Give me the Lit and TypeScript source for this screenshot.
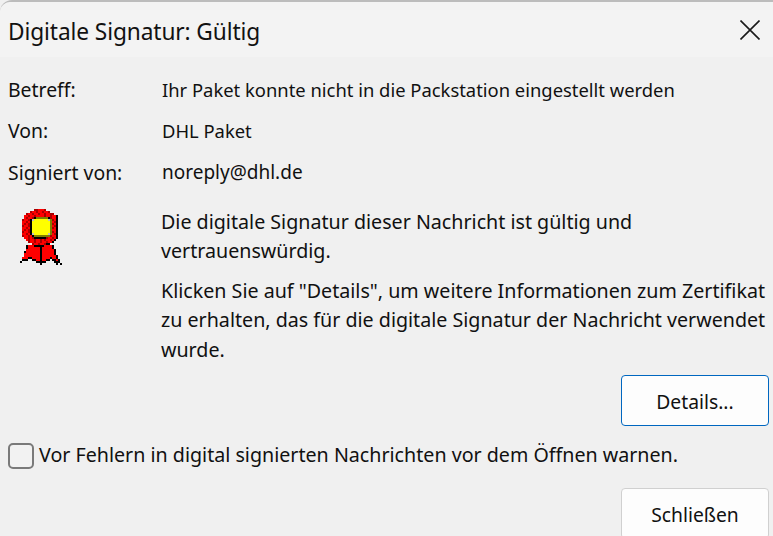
import { LitElement, html, css, svg } from "lit";
import { customElement } from "lit/decorators.js";

const RIBBON = [
  ".......DDRRRD........",
  ".....DRRDRRDRRD......",
  "...DRRDRRDRRDRRDD....",
  "..RRDRRDRRRRDRRDRRK..",
  "..RDRRDKOOOOOOKDRRK..",
  ".DRRDKGYYYYYYYGODRK..",
  ".RRDRKYYYYYYYYYORDK..",
  ".RDRDKYYYYYYYYYODRK..",
  ".DRRDKYYYYYYYYYORDK..",
  ".RRDRKYYYYYYYYYODRK..",
  ".RDRDKYYYYYYYYYORRK..",
  ".DRRDKYYYYYYYYYODRK..",
  ".RRDRKGYYYYYYYGORDK..",
  ".DRRDRKOOOOOOOODRRK..",
  "..RRDRDKKKKKKDRRDRK..",
  "...RDRRDRRDRDRRDRK...",
  "....DRRDRRDRRDRRK....",
  "......DRRDRRDKK......",
  "...KRRRKKKKKRRRRK....",
  "...KRRRRRRKRRRRRK....",
  "...RRRRRRRKRRRRRRK...",
  "..KRRRRRRRKRRRRRRK...",
  "..RRRRRRRRKRRRRRRK...",
  "..RRRRRRRRKRRRRRRRK..",
  ".RRRKKRRRRKRRRRKRRK..",
  ".KKK..KKRRKRRKK.KKRK.",
  "K.......KKKKK....KKK.",
  "..........K.......K.K",
];
const COLORS: Record<string, string> = {
  R: "#fe0000",
  D: "#a80000",
  K: "#000000",
  Y: "#ffff00",
  O: "#808000",
  G: "#c0c0c0",
};

@customElement("app-root")
export class AppRoot extends LitElement {
  static styles = css`
    :host {
      display: block;
      width: 773px;
      height: 536px;
      overflow: hidden;
      background: #f0f0f0;
      font-family: "Noto Sans", sans-serif;
      color: #111;
      font-size: 19.66px;
    }
    .window {
      height: 536px;
      display: flex;
      flex-direction: column;
      border-top: 2px solid #bcbcbc;
      border-top-left-radius: 12px;
      box-sizing: border-box;
    }
    .titlebar {
      height: 55px;
      flex: none;
      display: flex;
      align-items: center;
      justify-content: space-between;
      background: #f3f3f3;
      padding: 0 13px 0 8px;
      border-top-left-radius: 10px;
    }
    .title {
      font-size: 22.7px;
      letter-spacing: -0.1px;
      padding-top: 4px;
    }
    .close {
      display: block;
      width: 20px;
      height: 20px;
    }
    .body {
      flex: 1;
      display: flex;
      flex-direction: column;
      padding: 0 4px 0 8px;
    }
    .fields {
      display: grid;
      grid-template-columns: 154px 1fr;
      grid-auto-rows: 41.3px;
      align-items: center;
      padding-top: 12px;
      font-size: 18.4px;
    }
    .label {
      font-size: 19.4px;
    }
    .mail {
      font-size: 19px;
    }
    .message {
      display: grid;
      grid-template-columns: 153px 1fr;
      margin-top: 14px;
    }
    .seal {
      display: block;
      margin: 2px 0 0 12px;
    }
    .message p {
      margin: 0 0 10px;
      line-height: 29.4px;
    }
    .actions {
      display: flex;
      justify-content: flex-end;
    }
    button {
      width: 148px;
      height: 51px;
      box-sizing: border-box;
      background: #fdfdfd;
      border: 1px solid #d0d0d0;
      border-radius: 4px;
      font: inherit;
      font-size: 19.3px;
      color: inherit;
      padding: 2px 0 0;
      flex: none;
    }
    button.primary {
      border: 1.5px solid #0067c0;
    }
    .details-row {
      margin-top: 0.6px;
    }
    .check {
      display: flex;
      align-items: center;
      gap: 5px;
      margin-top: 17px;
      height: 26px;
    }
    .check-text {
      margin-top: -2px;
    }
    .box {
      width: 26px;
      height: 26px;
      box-sizing: border-box;
      border: 2px solid #7a7a7a;
      border-radius: 5px;
      background: #f2f2f2;
      flex: none;
    }
    .close-row {
      margin-top: 19px;
    }
  `;

  private seal() {
    return html`<svg class="seal" width="42" height="56" viewBox="0 0 21 28" shape-rendering="crispEdges">
      ${RIBBON.flatMap((row, y) =>
        [...row].map((c, x) =>
          c === "." ? null : svg`<rect x=${x} y=${y} width="1" height="1" fill=${COLORS[c]}></rect>`
        )
      )}
    </svg>`;
  }

  render() {
    return html`<div class="window">
      <div class="titlebar">
        <span class="title">Digitale Signatur: Gültig</span>
        <svg class="close" viewBox="0 0 20 20" fill="none" stroke="#1a1a1a" stroke-width="1.6">
          <path d="M0.5 0.5L19.5 19.5M19.5 0.5L0.5 19.5"></path>
        </svg>
      </div>
      <div class="body">
        <div class="fields">
          <span class="label">Betreff:</span><span>Ihr Paket konnte nicht in die Packstation eingestellt werden</span>
          <span class="label">Von:</span><span>DHL Paket</span>
          <span class="label">Signiert von:</span><span class="mail">noreply@dhl.de</span>
        </div>
        <div class="message">
          ${this.seal()}
          <div>
            <p>Die digitale Signatur dieser Nachricht ist gültig und<br />vertrauenswürdig.</p>
            <p>Klicken Sie auf "Details", um weitere Informationen zum Zertifikat<br />zu erhalten, das für die digitale Signatur der Nachricht verwendet<br />wurde.</p>
          </div>
        </div>
        <div class="actions details-row"><button class="primary">Details...</button></div>
        <div class="check"><span class="box"></span><span class="check-text">Vor Fehlern in digital signierten Nachrichten vor dem Öffnen warnen.</span></div>
        <div class="actions close-row"><button>Schließen</button></div>
      </div>
    </div>`;
  }
}
